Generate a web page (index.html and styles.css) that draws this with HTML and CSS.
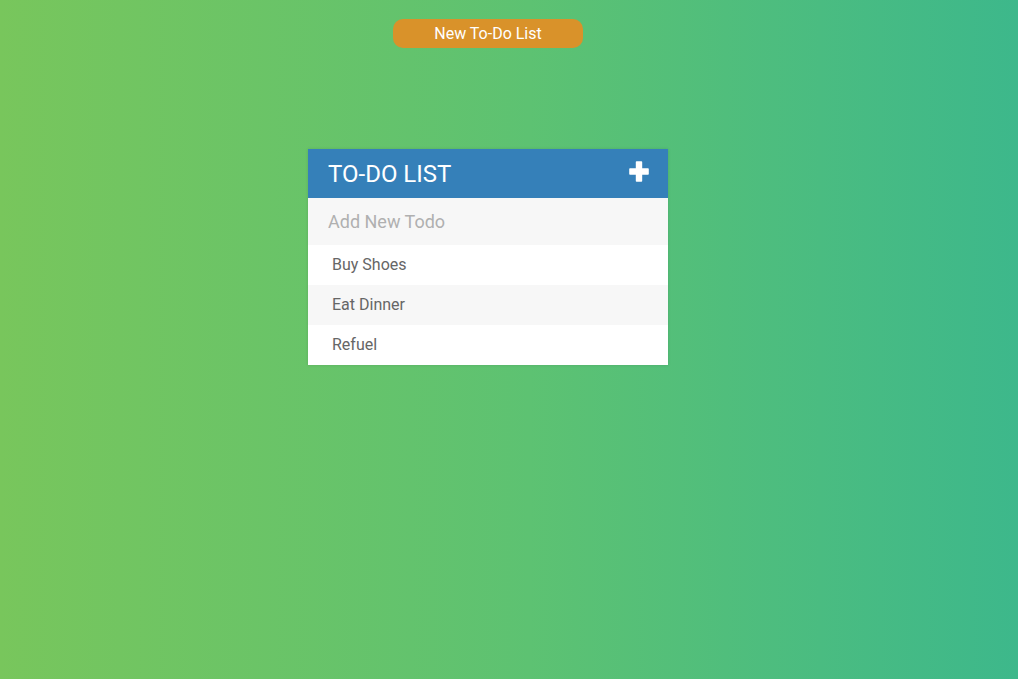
FILE: index.html
```html
<!DOCTYPE html>
<html>
<head>
<meta charset="utf-8">
<link rel="stylesheet" href="styles.css">
</head>
<body>
<div class="page">
  <button class="new-list">New To-Do List</button>
  <div class="card">
    <div class="card-head">
      <h1>TO-DO LIST</h1>
      <svg class="plus" width="20" height="21" viewBox="0 0 20 21"><path d="M7.6 1h4.8v7.1h6.6v4.8h-6.6V20H7.6v-7.1H1V8.1h6.6z" fill="#fff" stroke="#fff" stroke-width="1.6" stroke-linejoin="round"/></svg>
    </div>
    <input class="add" type="text" placeholder="Add New Todo">
    <ul class="items">
      <li>Buy Shoes</li>
      <li>Eat Dinner</li>
      <li>Refuel</li>
    </ul>
  </div>
</div>
</body>
</html>
```
FILE: styles.css
```css
html, body {
  margin: 0;
  height: 100%;
}
body {
  background: linear-gradient(to right, #78c65c, #5dc272 52%, #3db88b);
  font-family: Roboto, "Open Sans", sans-serif;
}
.page {
  width: 360px;
  margin-left: 308px;
  padding-top: 19px;
  display: flex;
  flex-direction: column;
  align-items: center;
}
.new-list {
  width: 190px;
  height: 29px;
  border: none;
  border-radius: 10px;
  background: #d9922a;
  color: #fff;
  font-family: Roboto, sans-serif;
  font-size: 16px;
  padding: 0;
  margin-bottom: 101px;
}
.card {
  width: 360px;
  background: #fff;
  box-shadow: 0 0 3px rgba(0,0,0,0.12);
}
.card-head {
  height: 49px;
  background: #3580b9;
  display: flex;
  align-items: center;
  justify-content: space-between;
  padding: 0 19px 0 20px;
  box-sizing: border-box;
}
.card-head h1 {
  margin: 0;
  color: #fff;
  font-size: 24px;
  font-weight: 400;
}
.plus {
  margin-top: -5px;
}
.add {
  display: block;
  width: 100%;
  height: 47px;
  box-sizing: border-box;
  border: none;
  outline: none;
  background: #f7f7f7;
  padding: 0 20px;
  font-family: Roboto, sans-serif;
  font-size: 18px;
  color: #666;
}
.add::placeholder {
  color: #b0b0b0;
}
.items {
  list-style: none;
  margin: 0;
  padding: 0;
}
.items li {
  height: 40px;
  line-height: 40px;
  padding-left: 24px;
  font-size: 16px;
  color: #666;
  background: #fff;
}
.items li:nth-child(2) {
  background: #f7f7f7;
}
```
